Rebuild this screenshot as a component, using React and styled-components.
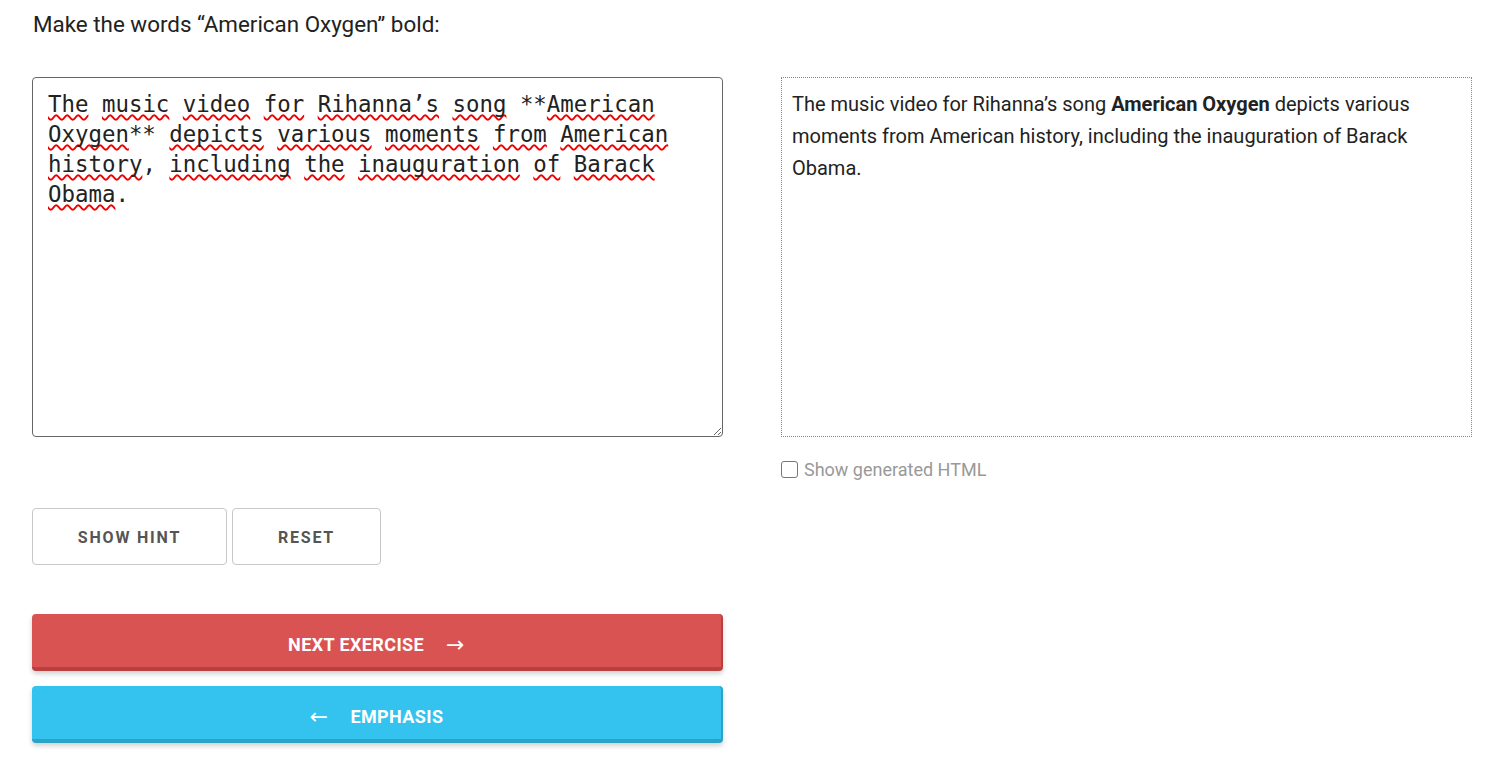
import React from "react";
import styled, { createGlobalStyle } from "styled-components";

const Global = createGlobalStyle`
  html, body { margin: 0; padding: 0; background: #fff; }
  body { font-family: Roboto, "Noto Sans", Arial, sans-serif; color: #222; }
  * { box-sizing: border-box; }
`;

const Page = styled.div`
  padding: 8px 32px 20px 32px;
  width: 1504px;
`;

const Prompt = styled.p`
  margin: 0 0 37px 1px;
  font-size: 22.4px;
  line-height: 32px;
  color: #222;
`;

const Grid = styled.div`
  display: grid;
  grid-template-columns: 691px 691px;
  column-gap: 58px;
  align-items: start;
`;

const Column = styled.div`
  display: flex;
  flex-direction: column;
`;

const Editor = styled.div`
  width: 691px;
  height: 360px;
  border: 1px solid #666;
  border-radius: 4px;
  padding: 11px 15px;
  font-family: "DejaVu Sans Mono", "Liberation Mono", monospace;
  font-size: 22.4px;
  line-height: 30px;
  color: #222;
  resize: both;
  overflow: auto;
  outline: none;
  white-space: pre-wrap;
  word-wrap: break-word;
`;

const Miss = styled.span`
  text-decoration: underline wavy #e00;
  text-decoration-thickness: 1.5px;
  text-underline-offset: 2px;
  text-decoration-skip-ink: none;
`;

const Preview = styled.div`
  height: 360px;
  border: 1px dotted #888;
  padding: 10px 10px;
  font-size: 20px;
  line-height: 32px;
  color: #222;
  b { font-weight: 700; }
`;

const CheckRow = styled.label`
  display: flex;
  align-items: center;
  gap: 6px;
  margin-top: 22px;
  font-size: 18px;
  color: #999;
  cursor: pointer;
`;

const Box = styled.span`
  width: 17px;
  height: 17px;
  border: 1.5px solid #777;
  border-radius: 3px;
  display: inline-block;
`;

const SmallRow = styled.div`
  display: flex;
  gap: 5px;
  margin-top: 71px;
`;

const GhostButton = styled.button`
  width: ${(p) => p.$w}px;
  height: 57px;
  background: #fff;
  border: 1px solid #c8c8c8;
  border-radius: 4px;
  font-family: Roboto, sans-serif;
  font-weight: 700;
  font-size: 16px;
  letter-spacing: 1.8px;
  color: #555;
  text-transform: uppercase;
  padding-top: 2px;
  cursor: pointer;
`;

const BigButton = styled.button`
  width: 691px;
  height: 57px;
  margin-top: ${(p) => p.$mt}px;
  background: ${(p) => p.$bg};
  border: none;
  border-right: 2px solid ${(p) => p.$dark};
  border-bottom: 4px solid ${(p) => p.$dark};
  border-radius: 4px;
  box-shadow: 0 3px 5px rgba(0, 0, 0, 0.18);
  color: #fff;
  font-family: Roboto, sans-serif;
  font-weight: 700;
  font-size: 18px;
  letter-spacing: 0.4px;
  display: flex;
  align-items: center;
  justify-content: center;
  gap: 22px;
  padding-top: 9px;
  cursor: pointer;
`;

const Arrow = styled.span`
  font-weight: 400;
  font-size: 22px;
  font-family: "DejaVu Sans", sans-serif;
`;

const words = (text) =>
  text.split(/(\s+)/).map((tok, i) => {
    if (/^\s+$/.test(tok) || tok === "") return tok;
    const m = tok.match(/^(\**)(.*?)([*.,]*)$/);
    return (
      <React.Fragment key={i}>
        {m[1]}
        <Miss>{m[2]}</Miss>
        {m[3]}
      </React.Fragment>
    );
  });

export default function App() {
  const src =
    "The music video for Rihanna\u2019s song **American Oxygen** depicts various moments from American history, including the inauguration of Barack Obama.";
  return (
    <Page>
      <Global />
      <Prompt>Make the words “American Oxygen” bold:</Prompt>
      <Grid>
        <Column>
          <Editor contentEditable suppressContentEditableWarning spellCheck={false}>
            {words(src)}
          </Editor>
          <SmallRow>
            <GhostButton $w={195}>Show Hint</GhostButton>
            <GhostButton $w={149}>Reset</GhostButton>
          </SmallRow>
          <BigButton $mt={49} $bg="#d95353" $dark="#b8413f">
            NEXT EXERCISE <Arrow>→</Arrow>
          </BigButton>
          <BigButton $mt={15} $bg="#33c3ee" $dark="#2ba2c6">
            <Arrow>←</Arrow> EMPHASIS
          </BigButton>
        </Column>
        <Column>
          <Preview>
            The music video for Rihanna’s song <b>American Oxygen</b> depicts various
            moments from American history, including the inauguration of Barack Obama.
          </Preview>
          <CheckRow>
            <Box />
            Show generated HTML
          </CheckRow>
        </Column>
      </Grid>
    </Page>
  );
}
